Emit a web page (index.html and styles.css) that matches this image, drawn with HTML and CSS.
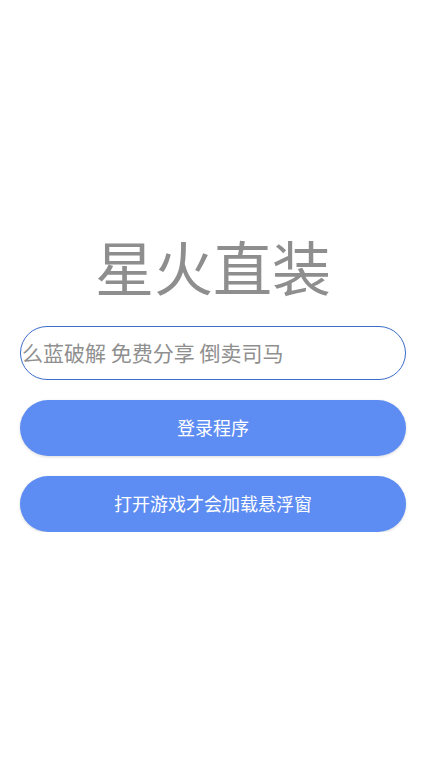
FILE: index.html
```html
<!DOCTYPE html>
<html lang="zh">
<head>
<meta charset="utf-8">
<title>星火直装</title>
<link rel="stylesheet" href="styles.css">
</head>
<body>
<main class="page">
  <h1 class="title">星火直装</h1>
  <div class="notice">
    <span class="notice-text">么蓝破解 免费分享 倒卖司马</span>
  </div>
  <button class="btn" type="button">登录程序</button>
  <button class="btn" type="button">打开游戏才会加载悬浮窗</button>
</main>
</body>
</html>
```
FILE: styles.css
```css
html, body {
  margin: 0;
  padding: 0;
  background: #ffffff;
}
body {
  font-family: "Noto Sans CJK SC", "Noto Sans", sans-serif;
}
.page {
  display: flex;
  flex-direction: column;
  padding: 236px 20px 0;
}
.title {
  margin: 0;
  font-size: 59px;
  line-height: 59px;
  font-weight: 400;
  color: #8e8e8e;
  text-align: center;
}
.notice {
  margin-top: 31px;
  height: 54px;
  box-sizing: border-box;
  border: 1px solid #3a6cc9;
  border-radius: 27px;
  display: flex;
  align-items: center;
  overflow: hidden;
  padding-bottom: 3px;
}
.notice-text {
  font-size: 21px;
  color: #8f8f8f;
  white-space: nowrap;
  margin-left: 1px;
}
.btn {
  margin-top: 20px;
  height: 56px;
  border: none;
  border-radius: 28px;
  background: #5d8cf2;
  color: #ffffff;
  font-family: "Noto Sans CJK SC", "Noto Sans", sans-serif;
  font-size: 18px;
  box-shadow: 0 1px 3px rgba(0, 0, 0, 0.15);
  padding: 0 0 2px;
}
```
